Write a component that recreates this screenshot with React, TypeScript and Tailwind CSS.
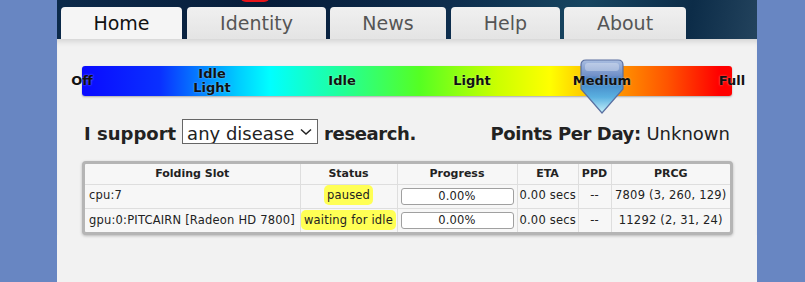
import { useState } from "react";

const tabs = [
  { name: "Home", w: "w-[121px]", active: true },
  { name: "Identity", w: "w-[139px]" },
  { name: "News", w: "w-[116px]" },
  { name: "Help", w: "w-[109px]" },
  { name: "About", w: "w-[122px]" },
];

const levels = ["Off", "Idle\nLight", "Idle", "Light", "Medium", "Full"];

const slots = [
  { slot: "cpu:7", status: "paused", progress: "0.00%", eta: "0.00 secs", ppd: "--", prcg: "7809 (3, 260, 129)" },
  {
    slot: "gpu:0:PITCAIRN [Radeon HD 7800]",
    status: "waiting for idle",
    progress: "0.00%",
    eta: "0.00 secs",
    ppd: "--",
    prcg: "11292 (2, 31, 24)",
  },
];

function Handle() {
  return (
    <svg width="44" height="56" viewBox="0 0 44 56" className="absolute left-[80%] top-[-7px] -translate-x-1/2">
      <defs>
        <linearGradient id="hg" x1="0" y1="0" x2="0" y2="1">
          <stop offset="0" stopColor="#a9bde0" />
          <stop offset="0.3" stopColor="#6f8fc8" />
          <stop offset="0.35" stopColor="#3f7cc0" />
          <stop offset="0.7" stopColor="#5ab0e0" />
          <stop offset="1" stopColor="#c8f2fb" />
        </linearGradient>
      </defs>
      <path
        d="M6 1 H38 Q43 1 43 6 V30 L22 54 L1 30 V6 Q1 1 6 1 Z"
        fill="url(#hg)"
        stroke="#5a6fa0"
        strokeWidth="1.2"
      />
      <rect x="5" y="4" width="34" height="8" rx="3" fill="#ffffff" opacity="0.3" />
    </svg>
  );
}

export default function App() {
  const [cause, setCause] = useState("any");

  return (
    <div className="flex h-[282px] w-full bg-[#6886c2] font-['DejaVu_Sans',sans-serif]">
      <div className="ml-[57px] flex w-[700px] flex-col bg-[#f2f2f2]">
        <div className="relative flex h-[39px] items-end gap-1 overflow-hidden bg-[linear-gradient(100deg,#0c2a4a_0%,#071d3a_30%,#0d2c4c_55%,#174560_75%,#0c2c48_90%,#23435d_100%)] pl-1">
          {/* bottom of the logo peeking in */}
          <div className="absolute left-[183px] top-[-10px] h-[12px] w-[30px] rounded-full bg-[#e8141a]" />
          {tabs.map((t, i) => (
            <div
              key={t.name}
              className={`${t.w} ${i === 1 || i === 3 ? "ml-px" : ""} relative flex h-[32px] items-center justify-center rounded-t-[4px] text-[19px] ${
                t.active
                  ? "bg-[#f5f5f5] text-[#111]"
                  : "bg-[linear-gradient(#f0f0f0,#e4e4e4)] text-[#555]"
              }`}
            >
              {t.name}
            </div>
          ))}
        </div>

        <div className="flex flex-col px-[25px] pt-[27px] shadow-[inset_0_6px_6px_-4px_rgba(0,0,0,0.15)]">
          <div className="relative h-[30px] w-[650px] rounded-[3px] bg-[linear-gradient(to_right,#0a0aff_0%,#0a30ff_12%,#00ccff_24%,#00ffff_29%,#22ff99_40%,#55ff22_52%,#ccff00_64%,#ffff00_72%,#ff9900_82%,#ff5500_90%,#ff0000_98%)] shadow-[0_1px_2px_rgba(0,0,0,0.3)]">
            <Handle />
            {levels.map((l, i) => (
              <span
                key={l}
                style={{ left: `${i * 20}%` }}
                className="absolute top-1/2 -translate-x-1/2 -translate-y-1/2 whitespace-pre text-center text-[13px] leading-[14px] font-bold text-[#111] [text-shadow:0_0_2px_rgba(255,255,255,0.5)]"
              >
                {l}
              </span>
            ))}
          </div>

          <div className="mt-[23px] flex items-center justify-between pl-[2px] pr-[2px]">
            <div className="flex items-center gap-[6px] text-[18px] font-bold text-[#222]">
              <span>I support</span>
              <div className="relative">
                <select
                  value={cause}
                  onChange={(e) => setCause(e.target.value)}
                  className="h-[25px] w-[136px] appearance-none border border-[#666] bg-white pl-[4px] text-[18px] font-normal text-[#222]"
                >
                  <option value="any">any disease</option>
                  <option value="alz">alzheimers</option>
                  <option value="cancer">cancer</option>
                </select>
                <svg
                  width="12"
                  height="8"
                  viewBox="0 0 12 8"
                  className="pointer-events-none absolute right-[6px] top-[9px]"
                >
                  <path d="M1 1.5 L6 6 L11 1.5" fill="none" stroke="#222" strokeWidth="1.5" />
                </svg>
              </div>
              <span className="tracking-[-0.4px]">research.</span>
            </div>
            <div className="text-[18px] text-[#222]">
              <span className="font-bold tracking-[-0.4px]">Points Per Day:</span> Unknown
            </div>
          </div>

          <div className="mt-[14px] w-[651px] rounded-[4px] border-[3px] border-[#b5b5b5] bg-[#f7f7f7] shadow-[0_1px_3px_rgba(0,0,0,0.25)]">
            <table className="w-full table-fixed border-collapse text-[11.5px] tracking-[0.2px] text-[#222]">
              <colgroup>
                <col className="w-[215px]" />
                <col className="w-[97px]" />
                <col className="w-[120px]" />
                <col className="w-[61px]" />
                <col className="w-[33px]" />
                <col />
              </colgroup>
              <thead>
                <tr className="h-[20px]">
                  {["Folding Slot", "Status", "Progress", "ETA", "PPD", "PRCG"].map((h) => (
                    <th
                      key={h}
                      className="border-l border-b border-[#dedede] text-[11px] font-bold tracking-normal first:border-l-0"
                    >
                      {h}
                    </th>
                  ))}
                </tr>
              </thead>
              <tbody>
                {slots.map((s, i) => (
                  <tr key={s.slot} className={`h-[24px] ${i === 0 ? "border-b border-[#dedede]" : ""}`}>
                    <td className="whitespace-nowrap pl-[4px]">{s.slot}</td>
                    <td className="border-l border-[#dedede] text-center">
                      <span className="rounded-[5px] bg-[#ffff55] px-[3px] py-[3px]">{s.status}</span>
                    </td>
                    <td className="border-l border-[#dedede] px-[3px]">
                      <div className="h-[17px] rounded-[3px] border border-[#a0a0a0] bg-white text-center leading-[15px]">
                        {s.progress}
                      </div>
                    </td>
                    <td className="whitespace-nowrap border-l border-[#dedede] pl-[2px]">{s.eta}</td>
                    <td className="border-l border-[#dedede] text-center">{s.ppd}</td>
                    <td className="whitespace-nowrap border-l border-[#dedede] text-center">{s.prcg}</td>
                  </tr>
                ))}
              </tbody>
            </table>
          </div>
        </div>
      </div>
    </div>
  );
}
